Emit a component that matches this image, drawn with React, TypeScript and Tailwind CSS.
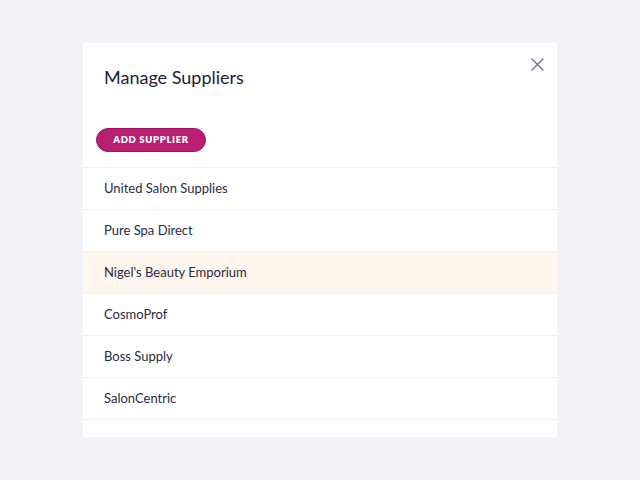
import React from 'react';

const suppliers = [
  'United Salon Supplies',
  'Pure Spa Direct',
  "Nigel's Beauty Emporium",
  'CosmoProf',
  'Boss Supply',
  'SalonCentric',
];

const App: React.FC = () => {
  const highlighted = "Nigel's Beauty Emporium";

  return (
    <div
      className="w-[640px] h-[480px] bg-[#f3f3f7] pt-[43px] flex justify-center"
      style={{ fontFamily: 'Lato, "Open Sans", sans-serif' }}
    >
      <div className="w-[474px] h-[394px] bg-white flex flex-col overflow-hidden">
        {/* Header */}
        <div className="relative px-[21px] pt-[22px]">
          <h2 className="text-[18px] leading-[24px] text-[#1d1d3a]">Manage Suppliers</h2>
          <button className="absolute right-[12px] top-[13px] w-[16px] h-[16px] flex items-center justify-center text-[#6b6f8e]">
            <svg width="13" height="13" viewBox="0 0 13 13" fill="none" stroke="currentColor" strokeWidth="1.4" strokeLinecap="round">
              <path d="M1 1L12 12M12 1L1 12" />
            </svg>
          </button>
        </div>

        {/* Action */}
        <div className="px-[13px] pt-[36px] pb-[15px]">
          <button className="h-[24px] w-[110px] rounded-full bg-[#b81f72] border border-[#9c1560] text-white text-[9.5px] font-extrabold tracking-[0.07em] uppercase">
            Add Supplier
          </button>
        </div>

        {/* List */}
        <div className="flex flex-col">
          {suppliers.map((name) => (
            <div
              key={name}
              className={`h-[42px] border-t border-[#f1f1f5] px-[21px] flex items-center text-[13px] text-[#2a2a45] ${name === highlighted ? 'bg-[#fff6ee]' : ''}`}
            >
              {name}
            </div>
          ))}
          <div className="h-[18px] border-t border-[#f1f1f5]" />
        </div>
      </div>
    </div>
  );
};

export default App;
